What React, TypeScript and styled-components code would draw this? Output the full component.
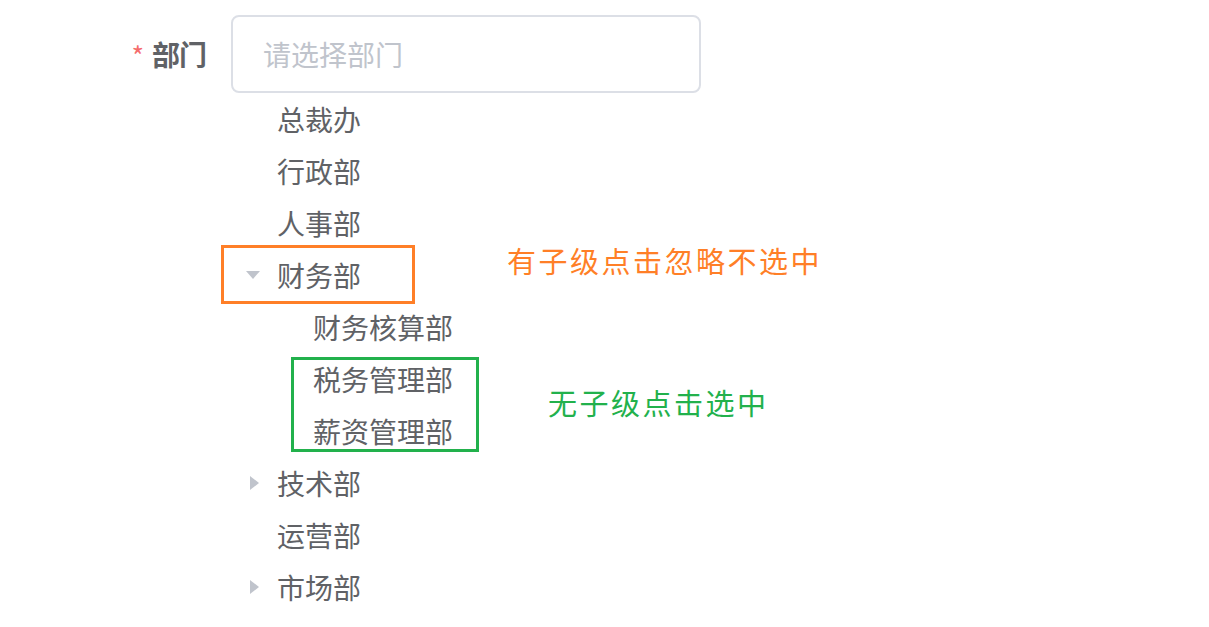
import React from "react";
import styled, { createGlobalStyle } from "styled-components";

const Global = createGlobalStyle`
  html, body { margin: 0; padding: 0; background: #ffffff; }
  body { font-family: "Noto Sans CJK SC", "Noto Sans", sans-serif; }
`;

const Page = styled.div`
  position: relative;
  width: 1209px;
  height: 627px;
  padding-top: 15px;
  box-sizing: border-box;
`;

const FormItem = styled.div`
  display: flex;
  align-items: flex-start;
`;

const Label = styled.label`
  width: 231px;
  height: 78px;
  box-sizing: border-box;
  padding-right: 25px;
  display: flex;
  align-items: center;
  justify-content: flex-end;
  font-size: 28px;
  font-weight: 700;
  color: #606266;
  letter-spacing: -1px;
`;

const Star = styled.span`
  color: #f56c6c;
  font-size: 27px;
  font-weight: 400;
  margin-right: 9px;
  margin-top: 2px;
`;

const Content = styled.div`
  display: flex;
  flex-direction: column;
  width: 470px;
`;

const Input = styled.div`
  height: 78px;
  box-sizing: border-box;
  border: 2px solid #dcdfe6;
  border-radius: 8px;
  padding-left: 30px;
  display: flex;
  align-items: center;
  font-size: 28px;
  color: #c0c4cc;
`;

const Tree = styled.div`
  display: flex;
  flex-direction: column;
  margin-left: -2px;
`;

const Node = styled.div<{ $level: number }>`
  height: 52px;
  display: flex;
  align-items: center;
  padding-left: ${(p) => p.$level * 36}px;
  font-size: 28px;
  color: #606266;
`;

const IconBox = styled.span`
  width: 48px;
  height: 52px;
  display: flex;
  align-items: center;
  justify-content: center;
  flex: none;
`;

const Arrow = ({ open }: { open?: boolean }) =>
  open ? (
    <svg width="14" height="8" viewBox="0 0 14 8">
      <polygon points="0,0 14,0 7,8" fill="#c0c4cc" />
    </svg>
  ) : (
    <svg width="9" height="14" viewBox="0 0 9 14" style={{ marginLeft: 2 }}>
      <polygon points="0,0 9,7 0,14" fill="#c0c4cc" />
    </svg>
  );

const Mark = styled.div<{ $color: string; $x: number; $y: number; $w: number; $h: number }>`
  position: absolute;
  left: ${(p) => p.$x}px;
  top: ${(p) => p.$y}px;
  width: ${(p) => p.$w}px;
  height: ${(p) => p.$h}px;
  box-sizing: border-box;
  border: 3px solid ${(p) => p.$color};
`;

const Note = styled.div<{ $color: string; $x: number; $y: number }>`
  position: absolute;
  left: ${(p) => p.$x}px;
  top: ${(p) => p.$y}px;
  font-size: 29px;
  line-height: 36px;
  letter-spacing: 2.5px;
  color: ${(p) => p.$color};
  white-space: nowrap;
  font-family: "Noto Sans CJK SC", sans-serif;
  font-weight: 400;
`;

type Item = { label: string; level: number; arrow?: "open" | "closed" };

const items: Item[] = [
  { label: "总裁办", level: 0 },
  { label: "行政部", level: 0 },
  { label: "人事部", level: 0 },
  { label: "财务部", level: 0, arrow: "open" },
  { label: "财务核算部", level: 1 },
  { label: "税务管理部", level: 1 },
  { label: "薪资管理部", level: 1 },
  { label: "技术部", level: 0, arrow: "closed" },
  { label: "运营部", level: 0 },
  { label: "市场部", level: 0, arrow: "closed" },
];

export default function App() {
  return (
    <>
      <Global />
      <Page>
        <FormItem>
          <Label>
            <Star>*</Star>部门
          </Label>
          <Content>
            <Input>请选择部门</Input>
            <Tree>
              {items.map((it) => (
                <Node key={it.label} $level={it.level}>
                  <IconBox>{it.arrow && <Arrow open={it.arrow === "open"} />}</IconBox>
                  {it.label}
                </Node>
              ))}
            </Tree>
          </Content>
        </FormItem>
        <Mark $color="#ff7f27" $x={221} $y={245} $w={194} $h={59} />
        <Mark $color="#22b14c" $x={291} $y={357} $w={188} $h={95} />
        <Note $color="#ff7f27" $x={507} $y={242}>有子级点击忽略不选中</Note>
        <Note $color="#22b14c" $x={548} $y={384}>无子级点击选中</Note>
      </Page>
    </>
  );
}
